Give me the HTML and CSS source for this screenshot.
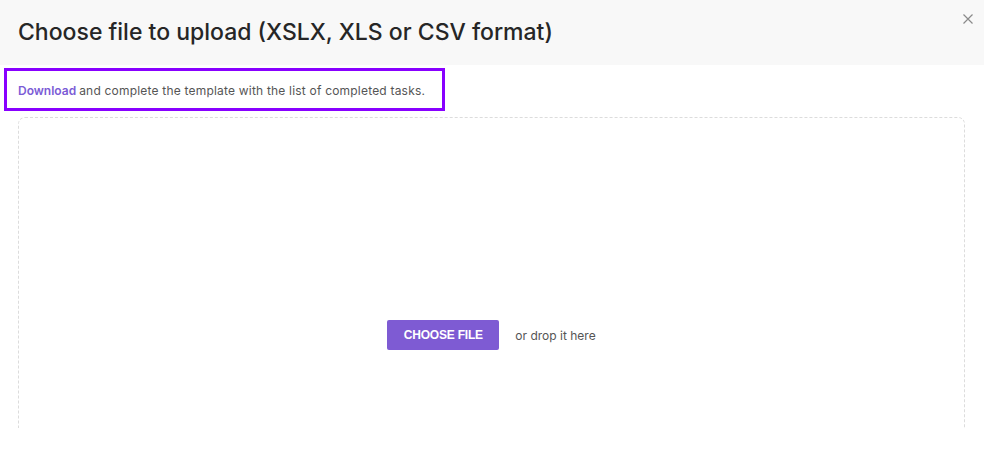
FILE: index.html
```html
<!DOCTYPE html>
<html lang="en">
<head>
<meta charset="utf-8">
<title>Upload</title>
<link rel="stylesheet" href="styles.css">
</head>
<body>
<div class="modal">
  <header class="modal-header">
    <h1 class="modal-title">Choose file to upload (XSLX, XLS or CSV format)</h1>
    <button class="close" aria-label="Close">
      <svg width="10" height="10" viewBox="0 0 10 10"><path d="M0.5 0.5L9.5 9.5M9.5 0.5L0.5 9.5" stroke="#8a8a8a" stroke-width="1.2" fill="none"/></svg>
    </button>
  </header>
  <div class="modal-body">
    <p class="hint"><a class="link" href="#">Download</a> and complete the template with the list of completed tasks.</p>
    <div class="dropzone">
      <button class="choose">CHOOSE FILE</button>
      <span class="drop-text">or drop it here</span>
    </div>
  </div>
</div>
</body>
</html>
```
FILE: styles.css
```css
* { box-sizing: border-box; }
html, body { margin: 0; padding: 0; background: #fff; }
body { font-family: Inter, "Noto Sans", sans-serif; color: #262626; }
.modal { width: 984px; height: 473px; overflow: hidden; position: relative; }
.modal-header {
  height: 65px;
  background: #f8f8f8;
  padding: 0 18px;
  display: flex;
  align-items: center;
}
.modal-title {
  margin: 0;
  font-size: 23px;
  font-weight: 500;
  color: #262626;
  letter-spacing: 0;
  padding-bottom: 1px;
}
.close {
  position: absolute;
  top: 14px;
  right: 11px;
  border: 0;
  background: none;
  padding: 0;
  width: 10px;
  height: 10px;
  display: block;
  cursor: pointer;
}
.close svg { display: block; }
.modal-body { height: 363px; overflow: hidden; }
.hint {
  margin: 3px 0 0 4px;
  width: 441px;
  height: 43px;
  border: 3px solid #8800ff;
  padding: 2px 0 0 11px;
  display: flex;
  align-items: center;
  font-size: 12px;
  letter-spacing: 0.2px;
  color: #555;
}
.link { color: #7b5bd6; font-weight: 600; letter-spacing: 0; text-decoration: none; margin-right: 3px; }
.dropzone {
  margin: 6px 19px 0 18px;
  height: 436px;
  border: 1.5px dashed #dcdcdc;
  border-radius: 7px;
  display: flex;
  align-items: center;
  justify-content: center;
  gap: 16px;
}
.choose {
  width: 112px;
  height: 30px;
  background: #7e5bd3;
  color: #fff;
  border: 0;
  border-radius: 2px;
  font-family: "Liberation Sans", Arial, sans-serif;
  font-weight: 700;
  font-size: 12px;
  letter-spacing: -0.2px;
}
.drop-text { font-size: 12px; color: #555; }
```
